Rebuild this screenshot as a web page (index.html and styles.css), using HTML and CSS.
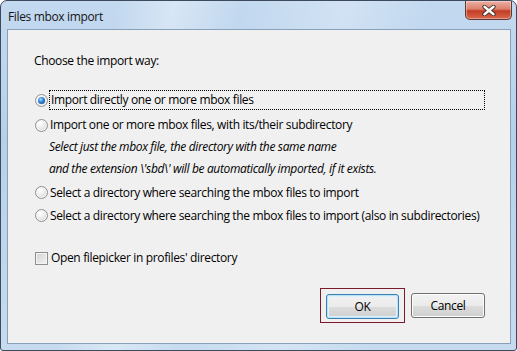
FILE: index.html
```html
<!DOCTYPE html>
<html lang="en">
<head>
    <meta charset="UTF-8">
    <title>Files mbox import</title>
    <link rel="stylesheet" href="styles.css">
</head>
<body>
    <div class="window">
        <div class="titlebar">
            <span class="title">Files mbox import</span>
            <span class="close-btn">
                <svg width="16" height="11" viewBox="0 0 16 11">
                    <path d="M3.5 1.8 L12.5 9.2 M12.5 1.8 L3.5 9.2" stroke="#3b2a28" stroke-width="4.2" stroke-linecap="round"/>
                    <path d="M3.5 1.8 L12.5 9.2 M12.5 1.8 L3.5 9.2" stroke="#ffffff" stroke-width="2.4" stroke-linecap="round"/>
                </svg>
            </span>
        </div>

        <div class="client">
            <p class="heading">Choose the import way:</p>

            <div class="option row-first">
                <span class="radio checked"></span>
                <span class="label focused">Import directly one or more mbox files</span>
            </div>
            <div class="option row-second">
                <span class="radio"></span>
                <span class="label">Import one or more mbox files, with its/their subdirectory</span>
            </div>
            <p class="note">Select just the mbox file, the directory with the same name</p>
            <p class="note">and the extension \'sbd\' will be automatically imported, if it exists.</p>
            <div class="option row-third">
                <span class="radio"></span>
                <span class="label">Select a directory where searching the mbox files to import</span>
            </div>
            <div class="option">
                <span class="radio"></span>
                <span class="label">Select a directory where searching the mbox files to import (also in subdirectories)</span>
            </div>

            <div class="check-row">
                <span class="checkbox"></span>
                <span class="label">Open filepicker in profiles' directory</span>
            </div>

            <div class="buttons">
                <div class="highlight">
                    <button class="btn default">OK</button>
                </div>
                <button class="btn cancel">Cancel</button>
            </div>
        </div>
    </div>
</body>
</html>
```

FILE: styles.css
```css
body {
    margin: 0;
    font-family: 'Open Sans', 'Noto Sans', Arial, sans-serif;
    font-size: 12px;
    letter-spacing: -0.35px;
    color: #000;
    background: #ffffff;
}
.window {
    width: 517px;
    height: 351px;
    box-sizing: border-box;
    border: 1px solid #3d4a5c;
    border-radius: 7px 7px 3px 3px;
    padding: 0 5px 6px 6px;
    display: flex;
    flex-direction: column;
    background:
        linear-gradient(100deg, rgba(255,255,255,0) 20%, rgba(255,255,255,0.35) 30%, rgba(255,255,255,0) 42%, rgba(255,255,255,0.25) 60%, rgba(255,255,255,0) 75%),
        linear-gradient(to bottom, #c3d9f0 0%, #b7d0ea 40%, #c6dbf0 100%);
}
.titlebar {
    height: 28px;
    display: flex;
    align-items: flex-start;
    justify-content: space-between;
}
.title {
    margin: 7px 0 0 1px;
    color: #151515;
}
.close-btn {
    width: 45px;
    height: 18px;
    margin-right: -1px;
    border: 1px solid #5d3a36;
    border-top: none;
    border-radius: 0 0 5px 5px;
    background: linear-gradient(to bottom, #ebb1a5 0%, #dc7f6c 45%, #c23c24 55%, #d8694b 100%);
    display: flex;
    align-items: center;
    justify-content: center;
    box-shadow: inset 0 0 0 1px rgba(255,255,255,0.35);
}
.client {
    flex: 1;
    border: 1px solid #8a9fb8;
    background: #f0f0f0;
    padding: 0 25px 0 26px;
    display: flex;
    flex-direction: column;
    white-space: nowrap;
}
.heading {
    margin: 23px 0 0 0;
    line-height: 16px;
}
.option {
    display: flex;
    align-items: center;
    height: 23px;
}
.row-first {
    height: 20px;
    margin-top: 21px;
}
.row-second {
    height: 22px;
    margin-top: 4px;
}
.row-third {
    margin-top: 1px;
}
.label {
    margin-left: 1px;
    padding: 0 1px;
    line-height: 18px;
}
.focused {
    flex: 1;
    border: 1px dotted #000;
}
.note {
    margin: 0 0 0 15px;
    height: 22px;
    line-height: 22px;
    font-style: italic;
}
.radio {
    width: 11px;
    height: 11px;
    margin-left: 1px;
    border: 1px solid #8f9090;
    border-radius: 50%;
    background: radial-gradient(circle at 35% 30%, #ffffff 0%, #ececec 45%, #cdcdcd 100%);
    box-shadow: inset 0 0 0 1px #f6f6f6;
    position: relative;
    flex-shrink: 0;
}
.radio.checked::after {
    content: "";
    position: absolute;
    left: 2px;
    top: 2px;
    width: 7px;
    height: 7px;
    border-radius: 50%;
    background: radial-gradient(circle at 40% 35%, #a6dcff 0%, #2a80d4 45%, #163f7c 100%);
}
.check-row {
    display: flex;
    align-items: center;
    height: 20px;
    margin-top: 21px;
}
.checkbox {
    width: 11px;
    height: 11px;
    margin-left: 1px;
    border: 1px solid #8f8f8f;
    background: linear-gradient(135deg, #d3d3d3 0%, #f3f3f3 100%);
    box-shadow: inset 0 0 0 1px #f4f4f4;
    flex-shrink: 0;
}
.check-row .label {
    margin-left: 2px;
}
.buttons {
    display: flex;
    justify-content: flex-end;
    align-items: center;
    margin-top: 20px;
    gap: 6px;
}
.highlight {
    border: 1px solid #7b1a2a;
    padding: 5px 5px 3px 5px;
}
.btn {
    width: 73px;
    height: 25px;
    font-family: inherit;
    font-size: 12px;
    letter-spacing: inherit;
    color: #000;
    border: 1px solid #707070;
    border-radius: 3px;
    background: linear-gradient(to bottom, #f2f2f2 0%, #ebebeb 50%, #dddddd 51%, #cfcfcf 100%);
    box-shadow: inset 0 0 0 1px #fcfcfc;
    padding: 0;
}
.btn.cancel {
    width: 74px;
}
.btn.default {
    border-color: #3c7fb1;
    box-shadow: inset 0 0 0 1px #b7e4f8, inset 0 0 0 2px #dff2fc;
}
```
